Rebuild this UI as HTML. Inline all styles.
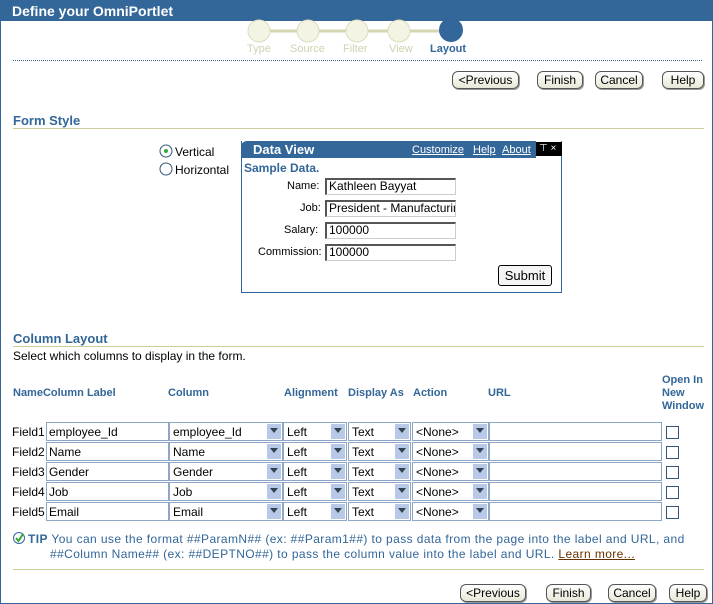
<!DOCTYPE html>
<html><head><style>
*{margin:0;padding:0;box-sizing:border-box}
body{width:713px;height:604px;background:#fff;font-family:"Liberation Sans",sans-serif;font-size:12px;color:#000;position:relative;overflow:hidden;border-left:1px solid #336699;border-right:1px solid #336699;border-bottom:1px solid #336699}
.a{position:absolute;white-space:nowrap}
.title{left:0;top:0;width:713px;height:21px;background:#336699;color:#fff;font-weight:bold;font-size:14px;padding:3px 0 0 11px}
.lbl{font-size:11px;color:#cfd1b1}
.btn{position:absolute;height:18px;border:1px solid #555;border-radius:6px;background:linear-gradient(#fff,#e8e8d8);font-size:12px;text-align:center;line-height:16px;box-shadow:1px 1px 0 #999}
.hdr{color:#336699;font-weight:bold;font-size:13px}
.hl{position:absolute;height:1px;background:#cccc99}
.th{color:#336699;font-weight:bold;font-size:11px}
.in{position:absolute;height:19px;border:1px solid #8da7c4;background:#fff;font-size:12px;padding:1px 2px;line-height:16px}
.sel{position:absolute;height:19px;border:1px solid #8da7c4;background:#fff;font-size:12px;padding:1px 3px;line-height:16px}
.sel:after{content:"";position:absolute;right:1px;top:1px;width:14px;height:15px;background:#b8c9e8}
.sel i{position:absolute;right:4px;top:5px;z-index:2;width:0;height:0;border-left:4px solid transparent;border-right:4px solid transparent;border-top:5px solid #345;}
.cb{position:absolute;width:13px;height:13px;border:1px solid #335577;background:#fff}
.dvin{position:absolute;height:17px;border:1px solid #ccc;border-top:2px solid #555;border-left:2px solid #555;font-size:12px;padding-left:2px;line-height:13px;background:#fff;overflow:hidden}
</style></head><body>
<div class="a title">Define your OmniPortlet</div>
<svg class="a" style="left:240px;top:17px" width="230" height="28">
<line x1="18" y1="14" x2="210" y2="14" stroke="#d5d6b4" stroke-width="3"/>
<circle cx="18" cy="14" r="11" fill="#f3f4e3" stroke="#dcdcbc"/>
<circle cx="67" cy="14" r="11" fill="#f3f4e3" stroke="#dcdcbc"/>
<circle cx="116" cy="14" r="11" fill="#f3f4e3" stroke="#dcdcbc"/>
<circle cx="158" cy="14" r="11" fill="#f3f4e3" stroke="#dcdcbc"/>
<circle cx="210" cy="13" r="12" fill="#336699"/>
</svg>
<div class="a lbl" style="left:246px;top:43px">Type</div>
<div class="a lbl" style="left:289px;top:43px">Source</div>
<div class="a lbl" style="left:342px;top:43px">Filter</div>
<div class="a lbl" style="left:388px;top:43px">View</div>
<div class="a" style="left:429px;top:43px;font-size:11px;font-weight:bold;color:#336699">Layout</div>
<div class="a" style="left:12px;top:60px;width:689px;border-top:1px dotted #336699"></div>
<div class="btn" style="left:451px;top:71px;width:67px">&lt;Previous</div>
<div class="btn" style="left:536px;top:71px;width:46px">Finish</div>
<div class="btn" style="left:594px;top:71px;width:48px">Cancel</div>
<div class="btn" style="left:661px;top:71px;width:42px">Help</div>
<div class="a hdr" style="left:12px;top:113px">Form Style</div>
<div class="hl" style="left:12px;top:128px;width:691px"></div>
<svg class="a" style="left:158px;top:144px" width="14" height="32"><circle cx="7" cy="7" r="6" fill="#fff" stroke="#335577"/><circle cx="7" cy="7" r="2" fill="#3a3"/><circle cx="7" cy="25" r="6" fill="#fff" stroke="#335577"/></svg>
<div class="a" style="left:174px;top:145px">Vertical</div>
<div class="a" style="left:174px;top:163px">Horizontal</div>
<div class="a" style="left:240px;top:141px;width:321px;height:152px;border:1px solid #336699;border-top:none">
 <div class="a" style="left:-1px;top:0;width:295px;height:17px;background:#336699;border-radius:6px 0 0 0"></div>
 <div class="a" style="left:11px;top:1px;color:#fff;font-weight:bold;font-size:13px">Data View</div>
 <div class="a" style="left:170px;top:3px;color:#fff;font-size:11px;text-decoration:underline">Customize</div>
 <div class="a" style="left:231px;top:3px;color:#fff;font-size:11px;text-decoration:underline">Help</div>
 <div class="a" style="left:260px;top:3px;color:#fff;font-size:11px;text-decoration:underline">About</div>
 <div class="a" style="left:294px;top:1px;width:26px;height:14px;background:#000;color:#fff;font-size:10px;padding-left:3px;line-height:13px">⊤ ×</div>
 <div class="a" style="left:2px;top:20px;color:#336699;font-weight:bold;font-size:12px">Sample Data.</div>
 <div class="a" style="left:45px;top:39px;font-size:11px">Name:</div>
 <div class="a" style="left:58px;top:61px;font-size:11px">Job:</div>
 <div class="a" style="left:42px;top:83px;font-size:11px">Salary:</div>
 <div class="a" style="left:16px;top:105px;font-size:11px">Commission:</div>
 <div class="dvin" style="left:83px;top:37px;width:131px">Kathleen Bayyat</div>
 <div class="dvin" style="left:83px;top:59px;width:131px">President - Manufacturing</div>
 <div class="dvin" style="left:83px;top:81px;width:131px">100000</div>
 <div class="dvin" style="left:83px;top:103px;width:131px">100000</div>
 <div class="a" style="left:256px;top:124px;width:54px;height:21px;border:1px solid #000;border-radius:3px;background:#f4f4f4;font-size:13px;text-align:center;line-height:19px">Submit</div>
</div>
<div class="a hdr" style="left:12px;top:331px">Column Layout</div>
<div class="hl" style="left:12px;top:346px;width:691px"></div>
<div class="a" style="left:12px;top:349px">Select which columns to display in the form.</div>
<div class="a th" style="left:12px;top:387px">NameColumn Label</div>
<div class="a th" style="left:167px;top:387px">Column</div>
<div class="a th" style="left:283px;top:387px">Alignment</div>
<div class="a th" style="left:347px;top:387px">Display As</div>
<div class="a th" style="left:412px;top:387px">Action</div>
<div class="a th" style="left:487px;top:387px">URL</div>
<div class="a th" style="left:661px;top:374px;line-height:13px;white-space:normal">Open In<br>New<br>Window</div>

<div class="a" style="left:11px;top:425px">Field1</div><div class="in" style="left:45px;top:422px;width:123px">employee_Id</div><div class="sel" style="left:168px;top:422px;width:114px">employee_Id<i></i></div><div class="sel" style="left:282px;top:422px;width:64px">Left<i></i></div><div class="sel" style="left:347px;top:422px;width:63px">Text<i></i></div><div class="sel" style="left:411px;top:422px;width:77px">&lt;None&gt;<i></i></div><div class="in" style="left:488px;top:422px;width:173px"></div><div class="cb" style="left:665px;top:426px"></div>
<div class="a" style="left:11px;top:445px">Field2</div><div class="in" style="left:45px;top:442px;width:123px">Name</div><div class="sel" style="left:168px;top:442px;width:114px">Name<i></i></div><div class="sel" style="left:282px;top:442px;width:64px">Left<i></i></div><div class="sel" style="left:347px;top:442px;width:63px">Text<i></i></div><div class="sel" style="left:411px;top:442px;width:77px">&lt;None&gt;<i></i></div><div class="in" style="left:488px;top:442px;width:173px"></div><div class="cb" style="left:665px;top:446px"></div>
<div class="a" style="left:11px;top:465px">Field3</div><div class="in" style="left:45px;top:462px;width:123px">Gender</div><div class="sel" style="left:168px;top:462px;width:114px">Gender<i></i></div><div class="sel" style="left:282px;top:462px;width:64px">Left<i></i></div><div class="sel" style="left:347px;top:462px;width:63px">Text<i></i></div><div class="sel" style="left:411px;top:462px;width:77px">&lt;None&gt;<i></i></div><div class="in" style="left:488px;top:462px;width:173px"></div><div class="cb" style="left:665px;top:466px"></div>
<div class="a" style="left:11px;top:485px">Field4</div><div class="in" style="left:45px;top:482px;width:123px">Job</div><div class="sel" style="left:168px;top:482px;width:114px">Job<i></i></div><div class="sel" style="left:282px;top:482px;width:64px">Left<i></i></div><div class="sel" style="left:347px;top:482px;width:63px">Text<i></i></div><div class="sel" style="left:411px;top:482px;width:77px">&lt;None&gt;<i></i></div><div class="in" style="left:488px;top:482px;width:173px"></div><div class="cb" style="left:665px;top:486px"></div>
<div class="a" style="left:11px;top:505px">Field5</div><div class="in" style="left:45px;top:502px;width:123px">Email</div><div class="sel" style="left:168px;top:502px;width:114px">Email<i></i></div><div class="sel" style="left:282px;top:502px;width:64px">Left<i></i></div><div class="sel" style="left:347px;top:502px;width:63px">Text<i></i></div><div class="sel" style="left:411px;top:502px;width:77px">&lt;None&gt;<i></i></div><div class="in" style="left:488px;top:502px;width:173px"></div><div class="cb" style="left:665px;top:506px"></div>

<svg class="a" style="left:12px;top:532px" width="13" height="13"><circle cx="6" cy="6" r="5.5" fill="#fff" stroke="#3366aa"/><path d="M3 6l2.5 3L10 2" fill="none" stroke="#3a3" stroke-width="2"/></svg>
<div class="a" style="left:27px;top:532px;color:#336699;font-size:12px;letter-spacing:0.4px"><b>TIP</b> You can use the format ##ParamN## (ex: ##Param1##) to pass data from the page into the label and URL, and</div>
<div class="a" style="left:49px;top:547px;color:#336699;font-size:12px;letter-spacing:0.4px">##Column Name## (ex: ##DEPTNO##) to pass the column value into the label and URL. <span style="color:#663300;text-decoration:underline">Learn more...</span></div>
<div class="hl" style="left:12px;top:569px;width:691px"></div>
<div class="btn" style="left:459px;top:584px;width:66px">&lt;Previous</div>
<div class="btn" style="left:545px;top:584px;width:45px">Finish</div>
<div class="btn" style="left:607px;top:584px;width:48px">Cancel</div>
<div class="btn" style="left:668px;top:584px;width:38px">Help</div>
</body></html>
